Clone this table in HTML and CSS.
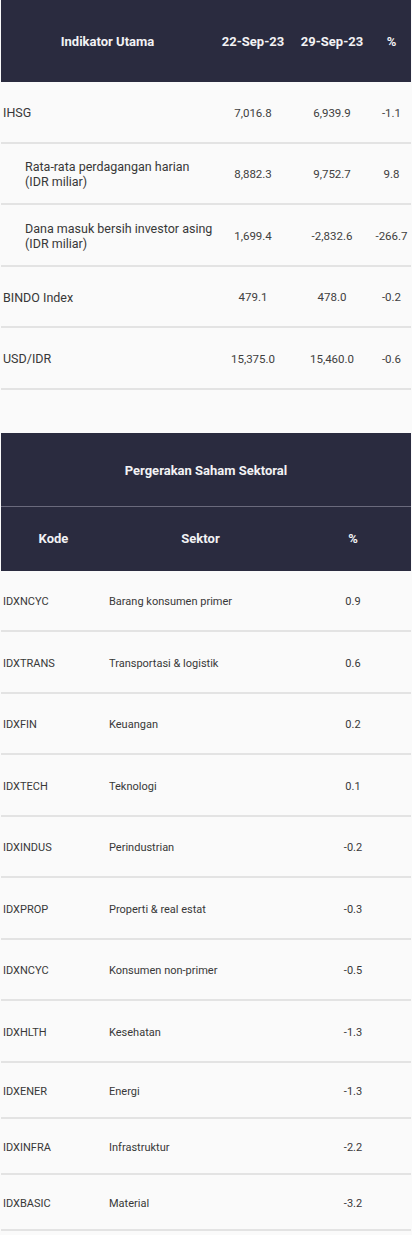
FILE: index.html
```html
<!DOCTYPE html>
<html lang="id">
<head>
<meta charset="utf-8">
<title>Indikator Utama</title>
<link rel="stylesheet" href="styles.css">
</head>
<body>
<table class="tbl tbl-main">
  <colgroup>
    <col class="c-label"><col class="c-num"><col class="c-num2"><col class="c-pct">
  </colgroup>
  <thead>
    <tr class="head">
      <th>Indikator Utama</th><th>22-Sep-23</th><th>29-Sep-23</th><th>%</th>
    </tr>
  </thead>
  <tbody>
    <tr><td class="lbl">IHSG</td><td class="num">7,016.8</td><td class="num">6,939.9</td><td class="num">-1.1</td></tr>
    <tr><td class="lbl sub">Rata-rata perdagangan harian (IDR miliar)</td><td class="num">8,882.3</td><td class="num">9,752.7</td><td class="num">9.8</td></tr>
    <tr><td class="lbl sub">Dana masuk bersih investor asing (IDR miliar)</td><td class="num">1,699.4</td><td class="num">-2,832.6</td><td class="num">-266.7</td></tr>
    <tr><td class="lbl">BINDO Index</td><td class="num">479.1</td><td class="num">478.0</td><td class="num">-0.2</td></tr>
    <tr><td class="lbl">USD/IDR</td><td class="num">15,375.0</td><td class="num">15,460.0</td><td class="num">-0.6</td></tr>
  </tbody>
</table>

<table class="tbl tbl-sector">
  <colgroup>
    <col class="c-code"><col class="c-sector"><col class="c-spct">
  </colgroup>
  <thead>
    <tr class="title"><th colspan="3">Pergerakan Saham Sektoral</th></tr>
    <tr class="head2"><th>Kode</th><th>Sektor</th><th>%</th></tr>
  </thead>
  <tbody>
    <tr><td class="code">IDXNCYC</td><td class="sector">Barang konsumen primer</td><td class="pct">0.9</td></tr>
    <tr><td class="code">IDXTRANS</td><td class="sector">Transportasi &amp; logistik</td><td class="pct">0.6</td></tr>
    <tr><td class="code">IDXFIN</td><td class="sector">Keuangan</td><td class="pct">0.2</td></tr>
    <tr><td class="code">IDXTECH</td><td class="sector">Teknologi</td><td class="pct">0.1</td></tr>
    <tr><td class="code">IDXINDUS</td><td class="sector">Perindustrian</td><td class="pct">-0.2</td></tr>
    <tr><td class="code">IDXPROP</td><td class="sector">Properti &amp; real estat</td><td class="pct">-0.3</td></tr>
    <tr><td class="code">IDXNCYC</td><td class="sector">Konsumen non-primer</td><td class="pct">-0.5</td></tr>
    <tr><td class="code">IDXHLTH</td><td class="sector">Kesehatan</td><td class="pct">-1.3</td></tr>
    <tr class="short"><td class="code">IDXENER</td><td class="sector">Energi</td><td class="pct">-1.3</td></tr>
    <tr class="short"><td class="code">IDXINFRA</td><td class="sector">Infrastruktur</td><td class="pct">-2.2</td></tr>
    <tr class="short"><td class="code">IDXBASIC</td><td class="sector">Material</td><td class="pct">-3.2</td></tr>
  </tbody>
</table>
</body>
</html>
```

FILE: styles.css
```css
html, body {
  margin: 0;
  padding: 0;
  background: #fafafa;
}
body {
  font-family: Roboto, "Noto Sans", sans-serif;
  color: #383838;
}
.tbl {
  width: 410px;
  border-collapse: collapse;
  table-layout: fixed;
  margin: 0 0 0 1px;
}
.tbl th {
  background: #2a2b3f;
  color: #f2f2f4;
  font-weight: 700;
  font-size: 13px;
  text-align: center;
  vertical-align: middle;
  padding: 0;
}
.tbl td {
  vertical-align: middle;
  padding: 2px 0 0 0;
  border-bottom: 2px solid #e3e3e3;
}

/* main indicators */
.c-label { width: 213px; }
.c-num { width: 78px; }
.c-num2 { width: 80px; }
.c-pct { width: 39px; }
.tbl-main .head th { height: 82px; }
.tbl-main td { height: 57.5px; }
.tbl-main .lbl {
  font-size: 12.5px;
  padding-left: 2px;
  line-height: 15px;
}
.tbl-main .lbl.sub {
  padding-left: 24px;
  padding-right: 0;
}
.tbl-main .num {
  font-size: 11.5px;
  text-align: center;
  color: #404040;
}

/* sector table */
.tbl-sector { margin-top: 43px; }
.c-code { width: 105px; }
.c-sector { width: 189px; }
.c-spct { width: 116px; }
.tbl-sector .title th {
  height: 71px;
  border-bottom: 1px solid #6a6a7c;
  padding-top: 2px;
}
.tbl-sector .head2 th { height: 64px; }
.tbl-sector td {
  height: 56.5px;
  font-size: 11px;
  padding-top: 3px;
}
.tbl-sector tr.short td { height: 51px; }
.tbl-sector .code { padding-left: 2px; }
.tbl-sector .sector { padding-left: 3px; }
.tbl-sector .pct { text-align: center; }
```
